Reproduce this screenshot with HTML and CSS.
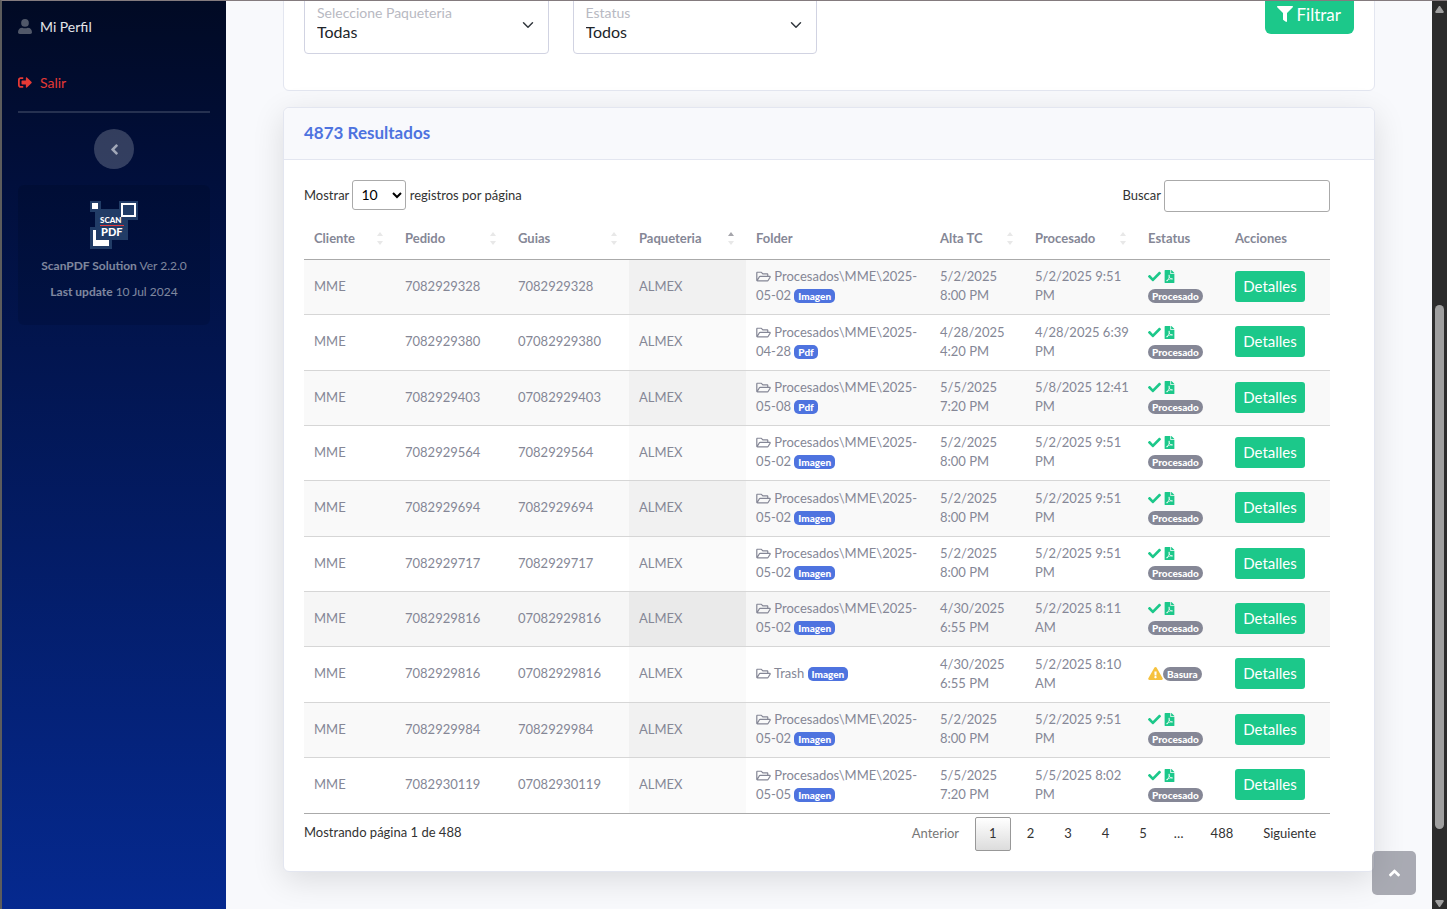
FILE: index.html
```html
<!DOCTYPE html>
<html lang="es">
  <head>
    <meta charset="UTF-8">
    <meta name="viewport" content="width=device-width, initial-scale=1.0">
    <title>ScanPDF Solution</title>
    <link rel="stylesheet" href="styles.css">
  </head>

  <body>
    <svg class="sprite" aria-hidden="true">
      <symbol id="i-user" viewBox="0 0 480 512"><circle cx="240" cy="132" r="132"/><path d="M480 452c0 34-26 60-60 60H60c-34 0-60-26-60-60 0-86 58-156 146-156 24 14 56 22 94 22s70-8 94-22c88 0 146 70 146 156z"/></symbol>
      <symbol id="i-logout" viewBox="0 0 512 512"><path d="M497 273L329 441c-15 15-41 4.500-41-17v-96H152c-13.300 0-24-10.700-24-24v-96c0-13.300 10.700-24 24-24h136V88c0-21.400 25.900-32 41-17l168 168c9.300 9.400 9.300 24.600 0 34zM192 436v-40c0-6.600-5.400-12-12-12H96c-17.700 0-32-14.300-32-32V160c0-17.700 14.300-32 32-32h84c6.600 0 12-5.400 12-12V76c0-6.600-5.400-12-12-12H96c-53 0-96 43-96 96v192c0 53 43 96 96 96h84c6.600 0 12-5.400 12-12z"/></symbol>
      <symbol id="i-filter" viewBox="0 0 512 512"><path d="M488 0H24C2.700 0-8 25.900 7 41l185 185v206c0 7.800 3.800 15.200 10.200 19.700l80 56C298 518.700 320 507.500 320 488V226L505 41c15-15 4.300-41-17-41z"/></symbol>
      <symbol id="i-folder" viewBox="0 0 576 512"><path d="M527.900 224H480v-48c0-26.500-21.500-48-48-48H272l-64-64H48C21.500 64 0 85.500 0 112v288c0 26.500 21.500 48 48 48h400c16.500 0 31.900-8.500 40.700-22.600l79.900-128c20-31.900-3-73.400-40.700-73.400zM48 118c0-3.300 2.700-6 6-6h134.100l64 64H426c3.300 0 6 2.700 6 6v42H152c-16.800 0-32.400 8.800-41.100 23.200L48 351.400zm400 282H72l77.200-128H528z"/></symbol>
      <symbol id="i-check" viewBox="0 0 512 512"><path d="M173.900 439.400L7.500 273c-10-10-10-26.200 0-36.200l36.200-36.200c10-10 26.200-10 36.200 0L192 312.700 432.100 72.600c10-10 26.200-10 36.200 0l36.200 36.200c10 10 10 26.200 0 36.200L210.100 439.400c-10 10-26.200 10-36.200 0z"/></symbol>
      <symbol id="i-pdf" viewBox="0 0 384 512"><path d="M181.900 256.100c-5-16-4.900-46.900-2-46.900 8.400 0 7.600 36.900 2 46.900zm-1.700 47.200c-7.700 20.200-17.300 43.300-28.400 62.700 18.300-7 39-17.200 62.900-21.900-12.700-9.600-24.900-23.400-34.500-40.800zM86.100 428.100c0 .8 13.200-5.400 34.900-40.200-6.700 6.300-29.100 24.500-34.900 40.200zM248 160h136v328c0 13.300-10.700 24-24 24H24c-13.300 0-24-10.700-24-24V24C0 10.700 10.700 0 24 0h200v136c0 13.200 10.800 24 24 24zm-8 171.800c-20-12.200-33.300-29-42.700-53.800 4.500-18.500 11.600-46.600 6.200-64.200-4.700-29.400-42.400-26.500-47.800-6.800-5 18.300-.4 44.100 8.100 77-11.600 27.600-28.700 64.600-40.800 85.800-.1 0-.1.100-.2.100-27.100 13.900-73.600 44.500-54.500 68 5.600 6.900 16 10 21.500 10 17.900 0 35.700-18 61.100-61.800 25.800-8.500 54.100-19.100 79-23.200 21.700 11.800 47.100 19.500 64 19.500 29.200 0 31.200-32 19.700-43.400-13.900-13.600-54.300-9.700-73.600-7.200zM377 105L279 7c-4.500-4.500-10.600-7-17-7h-6v128h128v-6.100c0-6.300-2.500-12.400-7-16.900zm-74.100 255.300c4.100-2.700-2.500-11.900-42.800-9 37.100 15.800 42.800 9 42.800 9z"/></symbol>
      <symbol id="i-warning" viewBox="0 0 576 512"><path d="M569.500 440c18.500 32-4.700 72-41.600 72H48.100c-36.900 0-60-40-41.600-72L246.400 24c18.500-32 64.700-32 83.200 0l239.900 416zM288 354c-25.400 0-46 20.600-46 46s20.600 46 46 46 46-20.600 46-46-20.600-46-46-46zm-43.700-165.300l7.400 136c.3 6.400 5.600 11.300 12 11.300h48.500c6.400 0 11.600-5 12-11.300l7.400-136c.4-6.900-5.100-12.700-12-12.700h-63.400c-6.900 0-12.400 5.800-12 12.700z"/></symbol>
      <symbol id="i-left" viewBox="0 0 256 512"><path d="M31.700 239l136-136c9.400-9.400 24.600-9.400 33.900 0l22.600 22.600c9.400 9.400 9.400 24.600 0 33.900L127.900 256l96.400 96.400c9.400 9.400 9.400 24.600 0 33.900L201.700 409c-9.400 9.400-24.600 9.400-33.900 0l-136-136c-9.500-9.400-9.500-24.600-.1-34z"/></symbol>
      <symbol id="i-up" viewBox="0 0 320 512"><path d="M177 159.700l136 136c9.400 9.400 9.400 24.600 0 33.900l-22.600 22.600c-9.400 9.400-24.600 9.400-33.900 0L160 255.900l-96.400 96.400c-9.400 9.400-24.600 9.400-33.900 0L7 329.700c-9.400-9.400-9.400-24.600 0-33.900l136-136c9.400-9.500 24.600-9.500 34-.1z"/></symbol>
    </svg>

    <div class="page">
      <nav class="sidebar">
        <a class="nav-link" href="#"><svg class="nav-icon"><use href="#i-user"/></svg>Mi Perfil</a>
        <a class="nav-link logout" href="#"><svg class="nav-icon"><use href="#i-logout"/></svg>Salir</a>
        <hr class="sidebar-divider">
        <button class="sidebar-toggle" type="button" aria-label="Contraer menú"><svg><use href="#i-left"/></svg></button>
        <div class="sidebar-card">
          <svg class="logo" viewBox="0 0 48 48" role="img" aria-label="ScanPDF">
            <path fill="#213c66" d="M0 0h11v8h18V0h19v19H38v20H22v9H0V26h5V11H0z"/>
            <path fill="#fff" d="M2 2h6v6H2zM3 29h3v10h13v6H3z"/>
            <path fill="none" stroke="#fff" stroke-width="2" d="M32 3h13v12H32z"/>
            <text class="logo-scan" x="10" y="22">SCAN</text>
            <path fill="#e03a3e" d="M10 24h24v1H10z"/>
            <text class="logo-pdf" x="11" y="35">PDF</text>
          </svg>
          <p><strong>ScanPDF Solution</strong> Ver 2.2.0</p>
          <p><strong>Last update</strong> 10 Jul 2024</p>
        </div>
      </nav>

      <main class="content">
        <section class="card filters">
          <form class="filter-grid">
            <div class="floating">
              <select id="paqueteria"><option>Todas</option></select>
              <label for="paqueteria">Seleccione Paqueteria</label>
            </div>
            <div class="floating">
              <select id="estatus"><option>Todos</option></select>
              <label for="estatus">Estatus</label>
            </div>
            <button class="btn btn-filter" type="button"><svg><use href="#i-filter"/></svg>Filtrar</button>
          </form>
        </section>

        <section class="card results">
          <header class="card-header"><h6>4873 Resultados</h6></header>
          <div class="card-body">
            <div class="table-tools">
              <label>Mostrar <select class="length"><option>10</option><option>25</option></select> registros por página</label>
              <label>Buscar <input class="search" type="search"></label>
            </div>

            <table>
              <colgroup>
                <col class="c-cliente"><col class="c-pedido"><col class="c-guias">
                <col class="c-paqueteria"><col class="c-folder"><col class="c-alta">
                <col class="c-procesado"><col class="c-estatus"><col class="c-acciones">
              </colgroup>
              <thead>
                <tr>
                  <th class="sort">Cliente</th>
                  <th class="sort">Pedido</th>
                  <th class="sort">Guias</th>
                  <th class="sort asc">Paqueteria</th>
                  <th>Folder</th>
                  <th class="sort">Alta TC</th>
                  <th class="sort">Procesado</th>
                  <th>Estatus</th>
                  <th>Acciones</th>
                </tr>
              </thead>
              <tbody>
                <tr>
                  <td>MME</td><td>7082929328</td><td>7082929328</td><td class="sorted">ALMEX</td>
                  <td><svg class="folder"><use href="#i-folder"/></svg> Procesados\MME\2025-<br>05-02 <span class="badge type">Imagen</span></td>
                  <td>5/2/2025<br>8:00 PM</td><td>5/2/2025 9:51<br>PM</td>
                  <td><svg class="check"><use href="#i-check"/></svg><svg class="pdf"><use href="#i-pdf"/></svg><br><span class="badge pill">Procesado</span></td>
                  <td><button class="btn btn-sm" type="button">Detalles</button></td>
                </tr>
                <tr>
                  <td>MME</td><td>7082929380</td><td>07082929380</td><td class="sorted">ALMEX</td>
                  <td><svg class="folder"><use href="#i-folder"/></svg> Procesados\MME\2025-<br>04-28 <span class="badge type">Pdf</span></td>
                  <td>4/28/2025<br>4:20 PM</td><td>4/28/2025 6:39<br>PM</td>
                  <td><svg class="check"><use href="#i-check"/></svg><svg class="pdf"><use href="#i-pdf"/></svg><br><span class="badge pill">Procesado</span></td>
                  <td><button class="btn btn-sm" type="button">Detalles</button></td>
                </tr>
                <tr>
                  <td>MME</td><td>7082929403</td><td>07082929403</td><td class="sorted">ALMEX</td>
                  <td><svg class="folder"><use href="#i-folder"/></svg> Procesados\MME\2025-<br>05-08 <span class="badge type">Pdf</span></td>
                  <td>5/5/2025<br>7:20 PM</td><td>5/8/2025 12:41<br>PM</td>
                  <td><svg class="check"><use href="#i-check"/></svg><svg class="pdf"><use href="#i-pdf"/></svg><br><span class="badge pill">Procesado</span></td>
                  <td><button class="btn btn-sm" type="button">Detalles</button></td>
                </tr>
                <tr>
                  <td>MME</td><td>7082929564</td><td>7082929564</td><td class="sorted">ALMEX</td>
                  <td><svg class="folder"><use href="#i-folder"/></svg> Procesados\MME\2025-<br>05-02 <span class="badge type">Imagen</span></td>
                  <td>5/2/2025<br>8:00 PM</td><td>5/2/2025 9:51<br>PM</td>
                  <td><svg class="check"><use href="#i-check"/></svg><svg class="pdf"><use href="#i-pdf"/></svg><br><span class="badge pill">Procesado</span></td>
                  <td><button class="btn btn-sm" type="button">Detalles</button></td>
                </tr>
                <tr>
                  <td>MME</td><td>7082929694</td><td>7082929694</td><td class="sorted">ALMEX</td>
                  <td><svg class="folder"><use href="#i-folder"/></svg> Procesados\MME\2025-<br>05-02 <span class="badge type">Imagen</span></td>
                  <td>5/2/2025<br>8:00 PM</td><td>5/2/2025 9:51<br>PM</td>
                  <td><svg class="check"><use href="#i-check"/></svg><svg class="pdf"><use href="#i-pdf"/></svg><br><span class="badge pill">Procesado</span></td>
                  <td><button class="btn btn-sm" type="button">Detalles</button></td>
                </tr>
                <tr>
                  <td>MME</td><td>7082929717</td><td>7082929717</td><td class="sorted">ALMEX</td>
                  <td><svg class="folder"><use href="#i-folder"/></svg> Procesados\MME\2025-<br>05-02 <span class="badge type">Imagen</span></td>
                  <td>5/2/2025<br>8:00 PM</td><td>5/2/2025 9:51<br>PM</td>
                  <td><svg class="check"><use href="#i-check"/></svg><svg class="pdf"><use href="#i-pdf"/></svg><br><span class="badge pill">Procesado</span></td>
                  <td><button class="btn btn-sm" type="button">Detalles</button></td>
                </tr>
                <tr class="active">
                  <td>MME</td><td>7082929816</td><td>07082929816</td><td class="sorted">ALMEX</td>
                  <td><svg class="folder"><use href="#i-folder"/></svg> Procesados\MME\2025-<br>05-02 <span class="badge type">Imagen</span></td>
                  <td>4/30/2025<br>6:55 PM</td><td>5/2/2025 8:11<br>AM</td>
                  <td><svg class="check"><use href="#i-check"/></svg><svg class="pdf"><use href="#i-pdf"/></svg><br><span class="badge pill">Procesado</span></td>
                  <td><button class="btn btn-sm" type="button">Detalles</button></td>
                </tr>
                <tr>
                  <td>MME</td><td>7082929816</td><td>07082929816</td><td class="sorted">ALMEX</td>
                  <td><svg class="folder"><use href="#i-folder"/></svg> Trash <span class="badge type">Imagen</span></td>
                  <td>4/30/2025<br>6:55 PM</td><td>5/2/2025 8:10<br>AM</td>
                  <td><svg class="warning"><use href="#i-warning"/></svg><span class="badge pill">Basura</span></td>
                  <td><button class="btn btn-sm" type="button">Detalles</button></td>
                </tr>
                <tr>
                  <td>MME</td><td>7082929984</td><td>7082929984</td><td class="sorted">ALMEX</td>
                  <td><svg class="folder"><use href="#i-folder"/></svg> Procesados\MME\2025-<br>05-02 <span class="badge type">Imagen</span></td>
                  <td>5/2/2025<br>8:00 PM</td><td>5/2/2025 9:51<br>PM</td>
                  <td><svg class="check"><use href="#i-check"/></svg><svg class="pdf"><use href="#i-pdf"/></svg><br><span class="badge pill">Procesado</span></td>
                  <td><button class="btn btn-sm" type="button">Detalles</button></td>
                </tr>
                <tr>
                  <td>MME</td><td>7082930119</td><td>07082930119</td><td class="sorted">ALMEX</td>
                  <td><svg class="folder"><use href="#i-folder"/></svg> Procesados\MME\2025-<br>05-05 <span class="badge type">Imagen</span></td>
                  <td>5/5/2025<br>7:20 PM</td><td>5/5/2025 8:02<br>PM</td>
                  <td><svg class="check"><use href="#i-check"/></svg><svg class="pdf"><use href="#i-pdf"/></svg><br><span class="badge pill">Procesado</span></td>
                  <td><button class="btn btn-sm" type="button">Detalles</button></td>
                </tr>
              </tbody>
            </table>

            <div class="table-footer">
              <div class="table-info">Mostrando página 1 de 488</div>
              <nav class="pagination">
                <a class="disabled" href="#">Anterior</a>
                <a class="current" href="#">1</a>
                <a href="#">2</a>
                <a href="#">3</a>
                <a href="#">4</a>
                <a href="#">5</a>
                <span>…</span>
                <a href="#">488</a>
                <a href="#">Siguiente</a>
              </nav>
            </div>
          </div>
        </section>
      </main>

      <div class="scrollbar" aria-hidden="true">
        <svg viewBox="0 0 9 7"><path d="M4 0h1l4 6-1 1H1L0 6z"/></svg>
        <div class="scroll-track"><div class="scroll-thumb"></div></div>
        <svg viewBox="0 0 9 7"><path d="M4 7h1l4-6-1-1H1L0 1z"/></svg>
      </div>
    </div>

    <a class="scroll-top" href="#" aria-label="Subir"><svg><use href="#i-up"/></svg></a>
  </body>
</html>
```
FILE: styles.css
```css
* {
  box-sizing: border-box;
}

body {
  margin: 0;
  font-family: Lato, "Liberation Sans", sans-serif;
  font-size: 13px;
  line-height: 19px;
  color: #858796;
  background-color: #f8f9fc;
}

svg {
  fill: currentColor;
}

.sprite {
  display: none;
}

button,
input,
select {
  font-family: inherit;
}

.page {
  display: flex;
  height: 100vh;
  overflow: hidden;
  border-top: 1px solid #847b7e;
  border-left: 2px solid #5c5c5c;
}

/* Sidebar */
.sidebar {
  flex: 0 0 224px;
  padding: 0 16px;
  background: linear-gradient(180deg, #010a24 0%, #010f3c 20%, #05298f 100%);
}

.nav-link {
  display: flex;
  align-items: center;
  gap: 8px;
  height: 24px;
  margin-top: 13px;
  font-size: 14px;
  color: #e4e5e9;
  text-decoration: none;
}

.nav-icon {
  width: 14px;
  height: 15px;
  color: #515869;
}

.logout {
  margin-top: 32px;
}

.logout,
.logout .nav-icon {
  color: #e53935;
}

.sidebar-divider {
  height: 2px;
  margin: 17px 0 16px;
  border: 0;
  background-color: rgba(255, 255, 255, 0.15);
}

.sidebar-toggle {
  display: flex;
  align-items: center;
  justify-content: center;
  width: 40px;
  height: 40px;
  margin: 0 auto 16px;
  padding: 0;
  border: 0;
  border-radius: 50%;
  color: #a2a8b8;
  background-color: rgba(255, 255, 255, 0.2);
}

.sidebar-toggle svg {
  width: 9px;
  height: 17px;
}

.sidebar-card {
  height: 140px;
  padding: 16px 8px;
  border-radius: 6px;
  text-align: center;
  font-size: 12px;
  color: rgba(255, 255, 255, 0.5);
  background-color: rgba(0, 0, 0, 0.1);
}

.sidebar-card p {
  margin: 0 0 8px;
  line-height: 18px;
}

.logo {
  display: block;
  width: 48px;
  height: 48px;
  margin: 0 auto 8px;
}

.logo-scan,
.logo-pdf {
  font-weight: 900;
  fill: #fff;
}

.logo-scan {
  font-size: 8px;
}

.logo-pdf {
  font-size: 11px;
}

/* Cards */
.content {
  flex: 1;
  min-width: 0;
  padding: 0 57px;
}

.card {
  border: 1px solid #e3e6f0;
  border-radius: 6px;
  background-color: #fff;
}

.filters {
  margin: -26px 0 16px;
  padding: 20px;
}

.filter-grid {
  display: grid;
  grid-template-columns: repeat(4, 1fr);
  gap: 24px;
  margin-bottom: 16px;
}

.floating {
  position: relative;
}

.floating select {
  display: block;
  width: 100%;
  height: 58px;
  padding: 16px 12px 4px;
  border: 1px solid #d1d3e2;
  border-radius: 4px;
  appearance: none;
  font-size: 16px;
  color: #212529;
  background: #fff url("data:image/svg+xml,%3Csvg xmlns='http://www.w3.org/2000/svg' viewBox='0 0 16 16'%3E%3Cpath fill='none' stroke='%23343a40' stroke-linecap='round' stroke-linejoin='round' stroke-width='2' d='m2 5 6 6 6-6'/%3E%3C/svg%3E") no-repeat right 14px center / 12px;
}

.floating label {
  position: absolute;
  top: 7px;
  left: 13px;
  font-size: 14px;
  color: #b8b9c2;
}

.btn {
  border: 0;
  color: #fff;
  background-color: #1cc88a;
  cursor: pointer;
}

.btn-filter {
  display: flex;
  align-items: center;
  gap: 4px;
  grid-column: 4;
  justify-self: end;
  height: 38px;
  padding: 0 13px 2px 12px;
  border-radius: 6px;
  font-size: 17px;
}

.btn-filter svg {
  width: 16px;
  height: 16px;
}

.btn-sm {
  display: block;
  width: 70px;
  height: 31px;
  padding: 0 0 1px;
  border-radius: 3px;
  font-size: 15px;
}

.results {
  box-shadow: 0 8px 32px rgba(0, 0, 0, 0.12);
}

.card-header {
  padding: 15px 20px 17px;
  border-bottom: 1px solid #e3e6f0;
  border-radius: 6px 6px 0 0;
  background-color: #f8f9fc;
}

.card-header h6 {
  margin: 0;
  font-size: 17px;
  font-weight: 700;
  color: #4e73df;
}

.card-body {
  padding: 20px 44px 20px 20px;
}

/* Results table */
.table-tools {
  display: flex;
  justify-content: space-between;
  align-items: flex-start;
  height: 38px;
  color: #333;
}

.length {
  width: 54px;
  height: 30px;
  padding: 3px 4px 5px;
  border: 1px solid #aaa;
  border-radius: 3px;
  font-size: 14px;
  background-color: transparent;
}

.search {
  width: 166px;
  height: 32px;
  padding: 5px 5px 7px;
  border: 1px solid #aaa;
  border-radius: 3px;
}

table {
  width: 100%;
  table-layout: fixed;
  border-collapse: separate;
  border-spacing: 0;
  border-bottom: 1px solid #aaa;
}

.c-cliente {
  width: 91px;
}

.c-pedido,
.c-procesado {
  width: 113px;
}

.c-guias {
  width: 121px;
}

.c-paqueteria {
  width: 117px;
}

.c-folder {
  width: 184px;
}

.c-alta {
  width: 95px;
}

.c-estatus {
  width: 87px;
}

.c-acciones {
  width: 105px;
}

th {
  position: relative;
  height: 42px;
  padding: 0 10px;
  border-bottom: 1px solid #aaa;
  text-align: left;
  font-weight: 700;
}

.sort::before,
.sort::after {
  position: absolute;
  right: 12px;
  border: 3px solid transparent;
  content: "";
}

.sort::before {
  top: 11px;
  border-bottom: 4px solid #e8e8e8;
}

.sort::after {
  top: 23px;
  border-top: 4px solid #e8e8e8;
}

.asc::before {
  border-bottom-color: #a5a5ab;
}

td {
  height: 55px;
  padding: 0 10px 2px;
  border-bottom: 1px solid #d6d6d6;
  vertical-align: middle;
  white-space: nowrap;
}

tbody tr:nth-child(3n + 2) td {
  height: 56px;
}

tbody tr:last-child td {
  border-bottom: 0;
}

tbody tr:nth-child(odd) {
  background-color: #f9f9f9;
}

.sorted {
  background-color: #fafafa;
}

tr:nth-child(odd) .sorted {
  background-color: #f1f1f1;
}

tbody tr.active {
  background-color: #f6f6f6;
}

tr.active .sorted {
  background-color: #eaeaea;
}

td svg {
  height: 13px;
  vertical-align: -2px;
}

.folder {
  width: 15px;
}

.check {
  width: 13px;
  margin-right: 3px;
  color: #1cc88a;
}

.pdf {
  width: 11px;
  color: #1cc88a;
}

.warning {
  width: 15px;
  color: #f6c23e;
}

.badge {
  display: inline-block;
  height: 14px;
  padding: 0 4px;
  border-radius: 5px;
  vertical-align: 0;
  font-size: 10px;
  font-weight: 900;
  line-height: 14px;
  color: #fff;
}

.type {
  background-color: #4e73df;
}

.pill {
  border-radius: 7px;
  background-color: #858796;
}

/* Footer */
.table-footer {
  display: flex;
  justify-content: space-between;
  padding-top: 3px;
  color: #333;
}

.table-info {
  padding-top: 6px;
}

.pagination {
  display: flex;
  gap: 2px;
}

.pagination a,
.pagination span {
  height: 34px;
  padding: 6px 13px;
  border: 1px solid transparent;
  border-radius: 2px;
  text-align: center;
  color: #333;
  text-decoration: none;
}

.pagination span {
  padding: 6px 10px;
}

.pagination .disabled {
  color: #777;
}

.pagination .current {
  border-color: #989898;
  background: linear-gradient(#fff, #dcdcdc);
}

/* Window scrollbar */
.scrollbar {
  display: flex;
  flex: 0 0 15px;
  flex-direction: column;
  align-items: center;
  padding: 5px 0 2px;
  color: #9f9f9f;
  background-color: #2c2c2c;
}

.scrollbar svg {
  width: 9px;
  height: 7px;
}

.scroll-track {
  display: flex;
  flex: 1;
  flex-direction: column;
}

.scroll-track::before {
  flex: 292;
  content: "";
}

.scroll-track::after {
  flex: 71;
  content: "";
}

.scroll-thumb {
  flex: 524;
  width: 9px;
  border-radius: 5px;
  background-color: #9f9f9f;
}

.scroll-top {
  position: fixed;
  right: 31px;
  bottom: 14px;
  display: flex;
  align-items: center;
  justify-content: center;
  width: 44px;
  height: 44px;
  border-radius: 5px;
  color: #fff;
  background-color: rgba(90, 92, 105, 0.5);
}

.scroll-top svg {
  width: 11px;
  height: 18px;
}
```
